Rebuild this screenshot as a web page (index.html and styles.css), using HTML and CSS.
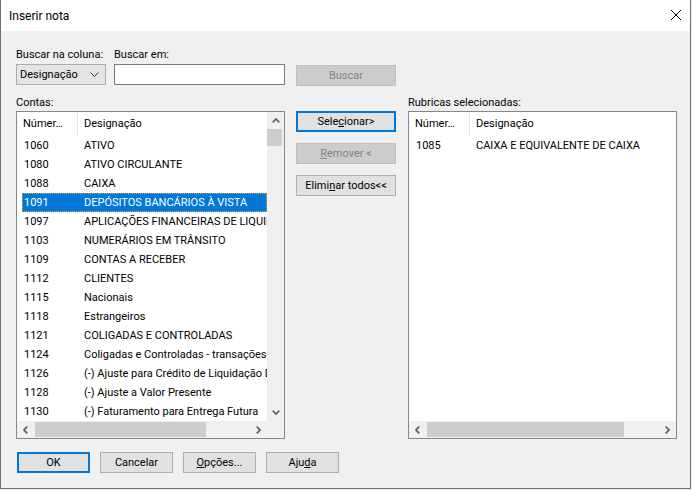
FILE: index.html
```html
<!DOCTYPE html>
<html>
  <head>
    <title>Inserir nota</title>
    <link rel="stylesheet" href="styles.css">
  </head>
  <body>
    <div class="dialog">
      <div class="titlebar">
        <span class="title">Inserir nota</span>
        <svg class="close" width="10" height="10" viewBox="0 0 10 10">
          <path d="M0 0L10 10M10 0L0 10" stroke="#000" stroke-width="1" fill="none" />
        </svg>
      </div>

      <div class="content">
        <!-- busca -->
        <div class="search-row">
          <div class="field w-combo">
            <div class="label">Buscar na coluna:</div>
            <div class="combo">
              <span>Designação</span>
              <svg width="9" height="5" viewBox="0 0 9 5">
                <path d="M0.5 0.5L4.5 4.5L8.5 0.5" stroke="#333" stroke-width="1" fill="none" />
              </svg>
            </div>
          </div>
          <div class="field w-input">
            <div class="label">Buscar em:</div>
            <div class="textbox"></div>
          </div>
          <button class="btn btn-disabled btn-search">Buscar</button>
        </div>

        <div class="main">
          <!-- contas -->
          <div class="side">
            <div class="label list-label">Contas:</div>
            <div class="listview has-vscroll">
              <div class="lv-content">
                <div class="lv-head">
                  <div class="h1">Númer…</div>
                  <div class="h2">Designação</div>
                </div>
                <div class="lv-row"><span class="c1">1060</span><span class="c2">ATIVO</span></div>
                <div class="lv-row"><span class="c1">1080</span><span class="c2">ATIVO CIRCULANTE</span></div>
                <div class="lv-row"><span class="c1">1088</span><span class="c2">CAIXA</span></div>
                <div class="lv-row selected"><span class="c1">1091</span><span class="c2">DEPÓSITOS BANCÁRIOS À VISTA</span></div>
                <div class="lv-row"><span class="c1">1097</span><span class="c2">APLICAÇÕES FINANCEIRAS DE LIQUIDEZ IMEDIATA</span></div>
                <div class="lv-row"><span class="c1">1103</span><span class="c2">NUMERÁRIOS EM TRÂNSITO</span></div>
                <div class="lv-row"><span class="c1">1109</span><span class="c2">CONTAS A RECEBER</span></div>
                <div class="lv-row"><span class="c1">1112</span><span class="c2">CLIENTES</span></div>
                <div class="lv-row"><span class="c1">1115</span><span class="c2">Nacionais</span></div>
                <div class="lv-row"><span class="c1">1118</span><span class="c2">Estrangeiros</span></div>
                <div class="lv-row"><span class="c1">1121</span><span class="c2">COLIGADAS E CONTROLADAS</span></div>
                <div class="lv-row"><span class="c1">1124</span><span class="c2">Coligadas e Controladas - transações</span></div>
                <div class="lv-row"><span class="c1">1126</span><span class="c2">(-) Ajuste para Crédito de Liquidação Duvidosa</span></div>
                <div class="lv-row"><span class="c1">1128</span><span class="c2">(-) Ajuste a Valor Presente</span></div>
                <div class="lv-row"><span class="c1">1130</span><span class="c2">(-) Faturamento para Entrega Futura</span></div>
              </div>
              <div class="vscroll">
                <div class="sb-btn">
                  <svg width="8" height="5" viewBox="0 0 8 5"><path d="M0.7 4.3L4 1L7.3 4.3" stroke="#606060" stroke-width="1.7" fill="none" /></svg>
                </div>
                <div class="vthumb"></div>
                <div class="sb-track"></div>
                <div class="sb-btn">
                  <svg width="8" height="5" viewBox="0 0 8 5"><path d="M0.7 0.7L4 4L7.3 0.7" stroke="#606060" stroke-width="1.7" fill="none" /></svg>
                </div>
              </div>
              <div class="hscroll">
                <div class="sb-btn">
                  <svg width="5" height="8" viewBox="0 0 5 8"><path d="M4.3 0.7L1 4L4.3 7.3" stroke="#606060" stroke-width="1.7" fill="none" /></svg>
                </div>
                <div class="hthumb" style="width: 171px"></div>
                <div class="sb-track"></div>
                <div class="sb-btn">
                  <svg width="5" height="8" viewBox="0 0 5 8"><path d="M0.7 0.7L4 4L0.7 7.3" stroke="#606060" stroke-width="1.7" fill="none" /></svg>
                </div>
              </div>
              <div class="corner"></div>
            </div>
          </div>

          <!-- acoes -->
          <div class="actions">
            <button class="btn btn-default">Sele<u>c</u>ionar&gt;</button>
            <button class="btn btn-disabled"><u>R</u>emover &lt;</button>
            <button class="btn">Elimi<u>n</u>ar todos&lt;&lt;</button>
          </div>

          <!-- selecionadas -->
          <div class="side side-right">
            <div class="label list-label">Rubricas selecionadas:</div>
            <div class="listview">
              <div class="lv-content">
                <div class="lv-head">
                  <div class="h1">Númer…</div>
                  <div class="h2">Designação</div>
                </div>
                <div class="lv-row"><span class="c1">1085</span><span class="c2">CAIXA E EQUIVALENTE DE CAIXA</span></div>
              </div>
              <div class="hscroll">
                <div class="sb-btn">
                  <svg width="5" height="8" viewBox="0 0 5 8"><path d="M4.3 0.7L1 4L4.3 7.3" stroke="#606060" stroke-width="1.7" fill="none" /></svg>
                </div>
                <div class="hthumb" style="width: 197px"></div>
                <div class="sb-track"></div>
                <div class="sb-btn">
                  <svg width="5" height="8" viewBox="0 0 5 8"><path d="M0.7 0.7L4 4L0.7 7.3" stroke="#606060" stroke-width="1.7" fill="none" /></svg>
                </div>
              </div>
            </div>
          </div>
        </div>

        <div class="footer">
          <button class="btn btn-default btn-foot">OK</button>
          <button class="btn btn-foot">Cancelar</button>
          <button class="btn btn-foot"><u>O</u>pções...</button>
          <button class="btn btn-foot">Aju<u>d</u>a</button>
        </div>
      </div>
    </div>
  </body>
</html>
```

FILE: styles.css
```css
html,
body {
  margin: 0;
  padding: 0;
  background-color: #f0f0f0;
}
body {
  font-family: Roboto, "Liberation Sans", sans-serif;
  font-size: 11px;
  color: #000000;
}
.dialog {
  width: 691px;
  height: 489px;
  box-sizing: border-box;
  border: 1px solid #6f6f6f;
  border-top: none;
  background-color: #f0f0f0;
}
.titlebar {
  height: 31px;
  background-color: #ffffff;
  display: flex;
  align-items: center;
  justify-content: space-between;
  padding: 0 9px 0 8px;
  box-sizing: border-box;
}
.title {
  font-size: 12px;
}
.close {
  display: block;
  margin-top: -1px;
}
.content {
  padding: 16px 0 0 15px;
}
.label {
  height: 15px;
  line-height: 15px;
  white-space: nowrap;
}

/* busca */
.search-row {
  display: flex;
  align-items: flex-start;
}
.field .label {
  margin-bottom: 2px;
}
.w-combo {
  width: 90px;
}
.w-input {
  width: 171px;
  margin-left: 8px;
}
.combo {
  height: 21px;
  box-sizing: border-box;
  border: 1px solid #adadad;
  background-color: #e5e5e5;
  display: flex;
  align-items: center;
  justify-content: space-between;
  padding: 0 6px 0 3px;
}
.combo svg {
  display: block;
}
.textbox {
  height: 21px;
  box-sizing: border-box;
  border: 1px solid #7a7a7a;
  background-color: #ffffff;
}

/* botoes */
.btn {
  font-family: inherit;
  font-size: 11px;
  color: #000000;
  width: 100px;
  height: 21px;
  padding: 0;
  box-sizing: border-box;
  border: 1px solid #adadad;
  background-color: #e1e1e1;
  display: block;
}
.btn-default {
  border: 2px solid #0078d7;
}
.btn-disabled {
  background-color: #cccccc;
  border-color: #bfbfbf;
  color: #838383;
}
.btn-search {
  margin: 18px 0 0 11px;
}
.btn u {
  text-decoration: underline;
}

/* listas */
.main {
  display: flex;
  margin-top: 9px;
}
.side {
  width: 269px;
}
.side-right {
  margin-left: 12px;
}
.list-label {
  margin-bottom: 1px;
}
.actions {
  width: 100px;
  margin-left: 11px;
  padding-top: 16px;
  display: flex;
  flex-direction: column;
  gap: 11px;
}
.listview {
  height: 328px;
  box-sizing: border-box;
  border: 1px solid #828790;
  background-color: #ffffff;
  display: grid;
  grid-template-columns: 1fr;
  grid-template-rows: 1fr 17px;
}
.listview.has-vscroll {
  grid-template-columns: 1fr 17px;
}
.lv-content {
  overflow: hidden;
  min-width: 0;
}
.lv-head {
  height: 24px;
  display: flex;
  white-space: nowrap;
}
.lv-head .h1 {
  width: 61px;
  box-sizing: border-box;
  padding-left: 6px;
  line-height: 23px;
  border-right: 1px solid #e5e5e5;
}
.lv-head .h2 {
  padding-left: 6px;
  line-height: 23px;
}
.lv-row {
  height: 19px;
  margin-left: 5px;
  display: flex;
  align-items: center;
  white-space: nowrap;
  overflow: hidden;
}
.lv-row .c1 {
  width: 55px;
  flex-shrink: 0;
  box-sizing: border-box;
  padding-left: 2px;
}
.lv-row .c2 {
  padding-left: 7px;
}
.lv-row.selected {
  background-color: #0078d7;
  color: #ffffff;
  outline: 1px dotted #f0a030;
  outline-offset: -1px;
}

/* barras de rolagem */
.vscroll {
  background-color: #f0f0f0;
  display: flex;
  flex-direction: column;
}
.hscroll {
  background-color: #f0f0f0;
  display: flex;
}
.sb-btn {
  width: 17px;
  height: 17px;
  flex-shrink: 0;
  display: flex;
  align-items: center;
  justify-content: center;
}
.sb-track {
  flex: 1;
}
.vthumb {
  height: 17px;
  margin: 0 2px 0 0;
  background-color: #cdcdcd;
}
.hthumb {
  margin: 1px 0 1px 1px;
  background-color: #cdcdcd;
}
.corner {
  background-color: #f0f0f0;
}

/* rodape */
.footer {
  display: flex;
  gap: 10px;
  margin-top: 13px;
  padding-left: 1px;
}
.btn-foot {
  width: 73px;
}
```
